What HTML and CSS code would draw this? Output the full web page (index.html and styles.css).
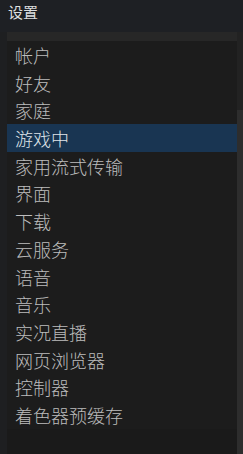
FILE: index.html
```html
<!DOCTYPE html>
<html lang="zh-CN">
  <head>
    <meta charset="UTF-8" />
    <title>设置</title>
    <link rel="stylesheet" href="styles.css">
  </head>
  <body>
    <div class="window">
      <div class="title">设置</div>
      <div class="content">
        <div class="panel">
          <div class="panelTop"></div>
          <ul class="menu">
            <li>帐户</li>
            <li>好友</li>
            <li>家庭</li>
            <li class="active">游戏中</li>
            <li>家用流式传输</li>
            <li>界面</li>
            <li>下载</li>
            <li>云服务</li>
            <li>语音</li>
            <li>音乐</li>
            <li>实况直播</li>
            <li>网页浏览器</li>
            <li>控制器</li>
            <li>着色器预缓存</li>
          </ul>
          <div class="panelBottom"></div>
        </div>
        <div class="scroll">
          <div class="scrollThumb"></div>
        </div>
      </div>
    </div>
  </body>
</html>
```

FILE: styles.css
```css
html,
body {
  margin: 0;
  height: 100%;
  background: #1e2024;
  font-family: "Noto Sans CJK SC", "Noto Sans", sans-serif;
  overflow: hidden;
}

.window {
  height: 454px;
  display: flex;
  flex-direction: column;
}

.title {
  height: 32px;
  padding-left: 8px;
  font-size: 15px;
  line-height: 24px;
  color: #dcdedf;
}

.content {
  flex: 1;
  display: flex;
  padding-left: 7px;
  background: #1e1f21;
}

.panel {
  width: 230px;
  display: flex;
  flex-direction: column;
  background: #1c1c1c;
}

.panelTop {
  height: 9px;
  background: #272727;
}

.menu {
  list-style: none;
  margin: 0;
  padding: 0;
}

.menu li {
  height: 27.7px;
  line-height: 28.5px;
  padding-left: 8px;
  font-size: 18px;
  font-weight: 300;
  color: #bdbdbd;
  white-space: nowrap;
}

.menu li.active {
  background: #193552;
  color: #dfe4e9;
}

.panelBottom {
  flex: 1;
  background: #1a1a1a;
}

.scroll {
  flex: 1;
  display: flex;
  flex-direction: column;
  background: #222222;
}

.scrollThumb {
  margin-top: 78px;
  flex: 1;
  background: #2d2d2d;
}
```
